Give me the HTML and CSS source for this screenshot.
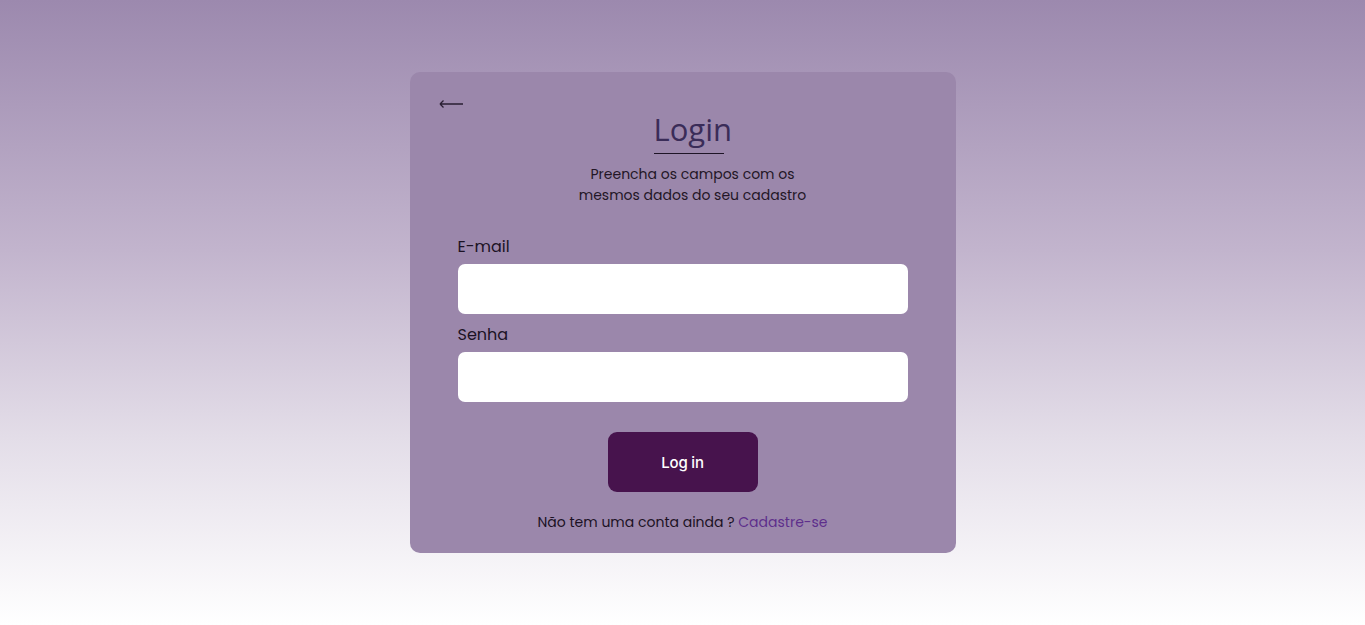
FILE: index.html
```html
<!DOCTYPE html>
<html lang="pt-BR">
<head>
<meta charset="utf-8">
<title>Login</title>
<link rel="stylesheet" href="styles.css">
</head>
<body>
<main class="page">
  <section class="card">
    <a class="back" href="#" aria-label="Voltar">
      <svg width="26" height="12" viewBox="0 0 26 12"><path d="M2 6H25M2 6L5.5 2.5M2 6L5.5 9.5" fill="none" stroke="#2a1f33" stroke-width="1.3"/></svg>
    </a>
    <h1 class="title">Login</h1>
    <p class="subtitle">Preencha os campos com os<br>mesmos dados do seu cadastro</p>
    <form class="form">
      <label class="field">
        <span class="label">E-mail</span>
        <input class="input" type="email">
      </label>
      <label class="field">
        <span class="label">Senha</span>
        <input class="input" type="password">
      </label>
      <button class="btn" type="button">Log in</button>
    </form>
    <p class="footer">Não tem uma conta ainda ? <a href="#" class="link">Cadastre-se</a></p>
  </section>
</main>
</body>
</html>
```

FILE: styles.css
```css
* { box-sizing: border-box; }
html, body { margin: 0; height: 100%; }
body {
  font-family: "Poppins", "Lato", "Noto Sans", sans-serif;
  background: linear-gradient(to bottom, #9c89ae 0%, #c2b4cd 40%, #e3dde8 70%, #ffffff 100%);
  min-height: 625px;
}
.page {
  display: flex;
  justify-content: center;
  padding-top: 72px;
}
.card {
  position: relative;
  width: 546px;
  height: 481px;
  background: #9b87ab;
  border-radius: 10px;
  display: flex;
  flex-direction: column;
  align-items: center;
  padding: 36px 48px 0;
}
.back {
  position: absolute;
  left: 28px;
  top: 26px;
  line-height: 0;
}
.title {
  margin: 0 0 0 12px;
  font-family: "Open Sans", sans-serif;
  font-weight: 400;
  font-size: 31px;
  line-height: 42px;
  color: #3a2c58;
  padding: 0 0 3px;
  border-bottom: 1.5px solid #1e1426;
  width: 70px;
  text-align: left;
  white-space: nowrap;
}
.subtitle {
  margin: 10px 0 0 20px;
  font-size: 14px;
  line-height: 21px;
  text-align: center;
  color: #231626;
}
.form {
  width: 100%;
  margin-top: 30px;
  display: flex;
  flex-direction: column;
}
.field {
  display: flex;
  flex-direction: column;
  margin-bottom: 10px;
}
.label {
  font-size: 16px;
  line-height: 22px;
  color: #1c1224;
  margin-bottom: 6px;
}
.input {
  width: 450px;
  height: 50px;
  border: none;
  border-radius: 7px;
  background: #fff;
  outline: none;
}
.btn {
  align-self: center;
  margin-top: 20px;
  width: 150px;
  height: 60px;
  border: none;
  border-radius: 9px;
  background: #47134d;
  color: #fff;
  font-family: "Inter", sans-serif;
  font-weight: 500;
  font-size: 15px;
  letter-spacing: -0.2px;
}
.footer {
  margin: 20px 0 0;
  font-size: 14px;
  line-height: 20px;
  color: #1c1224;
}
.link {
  color: #5e2f8c;
  text-decoration: none;
}
```
